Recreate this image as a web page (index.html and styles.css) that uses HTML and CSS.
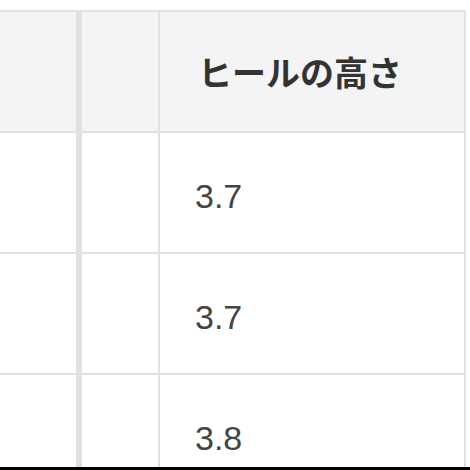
FILE: index.html
```html
<!DOCTYPE html>
<html lang="ja">
<head>
<meta charset="utf-8">
<link rel="stylesheet" href="styles.css">
</head>
<body>
<div class="frame">
  <table class="spec">
    <thead>
      <tr>
        <th class="c1"></th>
        <th class="c2"></th>
        <th class="c3">ヒールの高さ</th>
      </tr>
    </thead>
    <tbody>
      <tr>
        <td class="c1"></td>
        <td class="c2"></td>
        <td class="c3">3.7</td>
      </tr>
      <tr>
        <td class="c1"></td>
        <td class="c2"></td>
        <td class="c3">3.7</td>
      </tr>
      <tr>
        <td class="c1"></td>
        <td class="c2"></td>
        <td class="c3">3.8</td>
      </tr>
    </tbody>
  </table>
</div>
</body>
</html>
```

FILE: styles.css
```css
html, body {
  margin: 0;
  padding: 0;
  background: #000;
}

.frame {
  height: 467px;
  overflow: hidden;
  background: #fff;
  padding-top: 10px;
  box-sizing: border-box;
}

.spec {
  border-collapse: separate;
  border-spacing: 0;
  table-layout: fixed;
}

.spec th,
.spec td {
  padding: 0;
  height: 119px;
  border-bottom: 2px solid #e1e1e1;
  vertical-align: middle;
  text-align: left;
  box-sizing: content-box;
}

.spec th {
  background: #f4f4f4;
  border-top: 2px solid #e1e1e1;
  font-family: "Noto Sans CJK JP", "Noto Sans", sans-serif;
  font-weight: 700;
  font-size: 34px;
  color: #333;
}

.spec td {
  background: #fff;
  font-family: "Liberation Sans", Arial, sans-serif;
  font-size: 34px;
  color: #444;
}

.c1 {
  width: 76px;
  border-right: 6px solid #e1e1e1;
}

.c2 {
  width: 76px;
  border-right: 2px solid #e1e1e1;
}

.c3 {
  width: 304px;
  border-right: 2px solid #e1e1e1;
}

.spec th.c3 {
  padding-left: 38px;
  width: 266px;
}

.spec td.c3 {
  padding-left: 35px;
  padding-top: 7px;
  height: 112px;
  width: 269px;
}
```
